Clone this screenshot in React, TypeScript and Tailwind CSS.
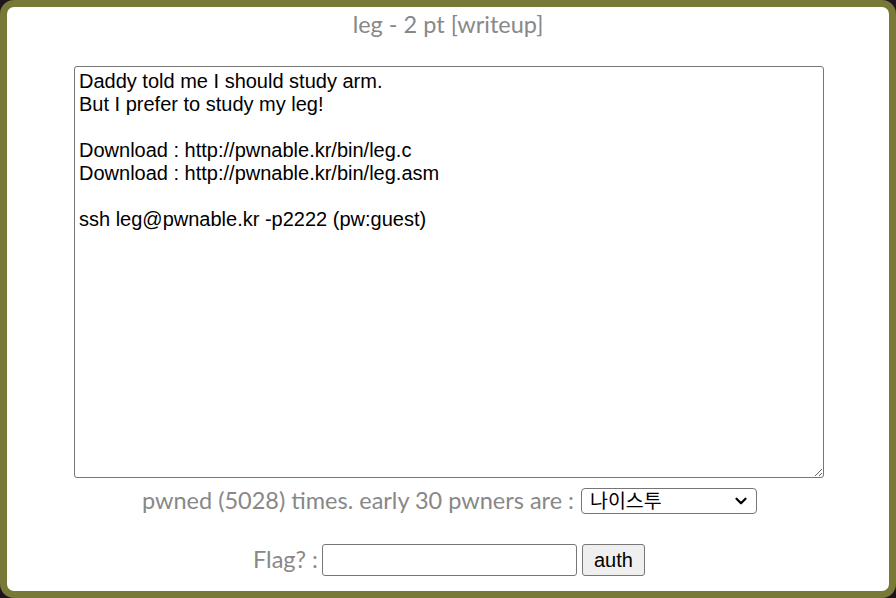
import { ChevronDown } from 'lucide-react';

const problemText = `Daddy told me I should study arm.
But I prefer to study my leg!

Download : http://pwnable.kr/bin/leg.c
Download : http://pwnable.kr/bin/leg.asm

ssh leg@pwnable.kr -p2222 (pw:guest)`;

export default function App() {
  return (
    <div className="w-[896px] h-[598px] bg-[#1e1420]">
      <div className="h-full rounded-[14px] border-[7px] border-[#787837] bg-white flex flex-col items-center pt-[4px]">
        <div className="font-['Lato',sans-serif] text-[23.5px] leading-[26px] text-[#888888]">
          leg - 2 pt [writeup]
        </div>

        <textarea
          readOnly
          defaultValue={problemText}
          className="mt-[29px] ml-[2px] w-[750px] h-[412px] border border-[#767676] rounded-[3px] px-[4px] pt-[3px] pb-[2px] font-['Liberation_Sans',Arial,sans-serif] text-[20px] leading-[23px] text-black resize outline-none"
        />

        <div className="mt-[10px] ml-[3px] h-[26px] flex items-center font-['Lato',sans-serif] text-[23.5px] leading-[26px] text-[#888888]">
          <span className="pb-[3px]">pwned (5028) times. early 30 pwners are :</span>
          <div className="relative ml-[7px] w-[176px] h-[26px] border border-[#767676] rounded-[4px] flex items-center">
            <span className="pl-[8px] font-['Liberation_Sans','Noto_Sans_CJK_KR',sans-serif] text-[19.5px] leading-[24px] text-black">
              나이스투
            </span>
            <ChevronDown size={18} strokeWidth={3} className="absolute right-[6px] top-[3px] text-black" />
          </div>
        </div>

        <div className="mt-[30px] ml-[2px] h-[32px] flex items-center font-['Lato',sans-serif] text-[23.5px] leading-[26px] text-[#888888]">
          <span className="pb-[2px]">Flag? :</span>
          <input
            type="text"
            className="ml-[4px] w-[255px] h-[32px] border border-[#767676] rounded-[3px] bg-white px-[2px] outline-none"
          />
          <button className="ml-[5px] w-[63px] h-[32px] border border-[#767676] rounded-[3px] bg-[#efefef] font-['Liberation_Sans',Arial,sans-serif] text-[20px] leading-[23px] text-black">
            auth
          </button>
        </div>
      </div>
    </div>
  );
}
